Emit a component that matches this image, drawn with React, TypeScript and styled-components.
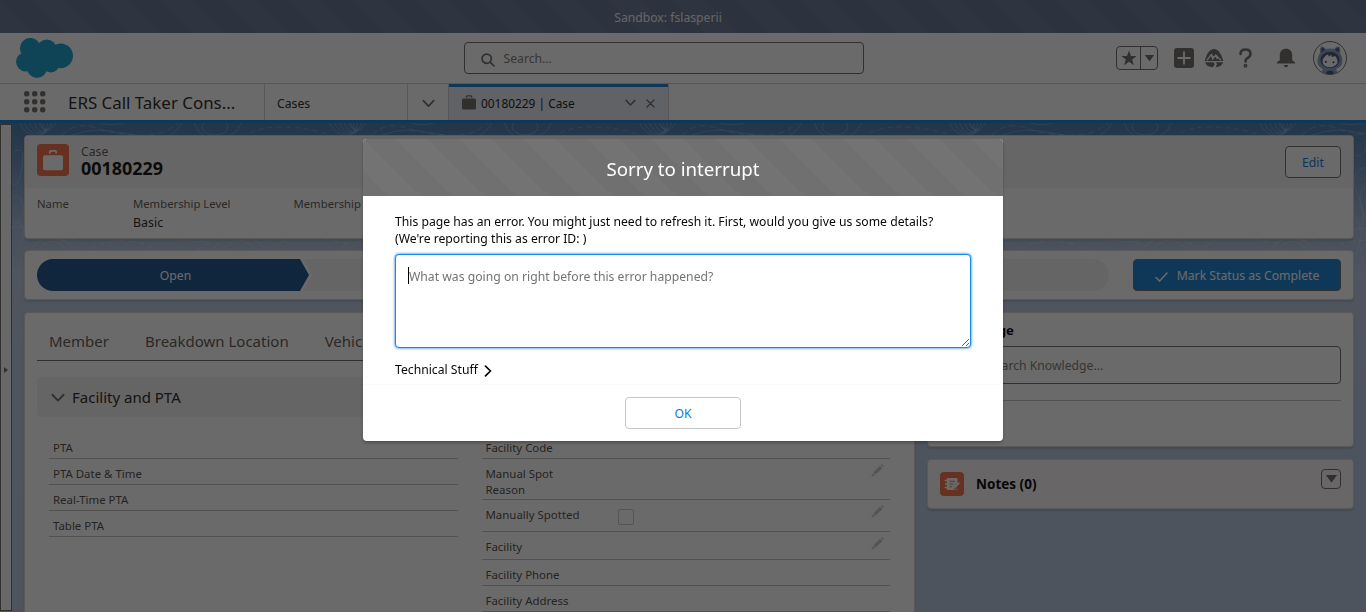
import React from "react";
import styled, { createGlobalStyle } from "styled-components";

const Global = createGlobalStyle`
  *, *::before, *::after { box-sizing: border-box; }
  html, body, #root { margin: 0; height: 100%; }
  body {
    overflow: hidden;
    font-family: "Noto Sans", "Open Sans", sans-serif;
    font-size: 12.2px;
    color: #080707;
  }
  button, textarea { font: inherit; }
`;

const brand = "#1a82d2";

const stripes = `
  background-image: linear-gradient(45deg,
    rgba(0, 0, 0, 0.025) 25%, transparent 25%, transparent 50%,
    rgba(0, 0, 0, 0.025) 50%, rgba(0, 0, 0, 0.025) 75%, transparent 75%);
  background-size: 64px 64px;
`;

const Page = styled.div`
  display: flex;
  flex-direction: column;
  width: 1366px;
  height: 612px;
  overflow: hidden;
  background: #fff;
`;

const SandboxBar = styled.div`
  flex: none;
  height: 33px;
  display: flex;
  align-items: center;
  justify-content: center;
  padding: 2px 30px 0 0;
  background-color: #667896;
  ${stripes}
  color: #f3f2f2;
`;

const Header = styled.header`
  flex: none;
  height: 51px;
  display: flex;
  align-items: center;
  justify-content: space-between;
  padding: 0 19px 0 16px;
  border-bottom: 1px solid #cfcecd;
`;

const SideSlot = styled.div<{ $end?: boolean }>`
  width: 240px;
  display: flex;
  align-items: center;
  justify-content: ${(p) => (p.$end ? "flex-end" : "flex-start")};
`;

const GlobalSearch = styled.div`
  width: 400px;
  height: 32px;
  margin-left: -36px;
  display: flex;
  align-items: center;
  gap: 9px;
  padding-left: 16px;
  border: 1px solid #706e6b;
  border-radius: 4px;
  color: #7d7b78;
`;

const FavoriteGroup = styled.div`
  display: flex;
  width: 42px;
  height: 24px;
  margin-right: 16px;
  border: 1px solid #706e6b;
  border-radius: 4px;
`;

const FavoritePart = styled.span<{ $w: number; $line?: boolean }>`
  width: ${(p) => p.$w}px;
  display: flex;
  align-items: center;
  justify-content: center;
  border-right: ${(p) => (p.$line ? "1px solid #706e6b" : "0")};
`;

const IconSlot = styled.span<{ $gap: number }>`
  display: flex;
  margin-right: ${(p) => p.$gap}px;
`;

const Nav = styled.nav`
  flex: none;
  height: 39px;
  display: flex;
  border-bottom: 3px solid ${brand};
`;

const AppName = styled.div`
  width: 265px;
  display: flex;
  align-items: center;
  gap: 22px;
  padding-left: 24px;
  border-right: 1px solid #cfcecd;
  font-size: 16.9px;
  color: #2b2826;
`;

const NavItem = styled.div<{ $w: number; $center?: boolean }>`
  width: ${(p) => p.$w}px;
  display: flex;
  align-items: center;
  justify-content: ${(p) => (p.$center ? "center" : "flex-start")};
  padding: 2px ${(p) => (p.$center ? 0 : 12)}px 0;
  border-right: ${(p) => (p.$center ? "0" : "1px solid #cfcecd")};
  color: #2b2826;
`;

const ActiveTab = styled.div`
  width: 221px;
  display: flex;
  align-items: center;
  padding: 0 13px;
  border: solid #cfcecd;
  border-width: 0 1px;
  box-shadow: inset 0 3px ${brand};
  background: #e3ebf5;
`;

const TabTitle = styled.span`
  flex: 1;
  padding: 2px 0 0 5px;
  font-size: 11.9px;
  color: #1c1a19;
`;

const TabTools = styled.span`
  display: flex;
  align-items: center;
  gap: 10px;
  padding-top: 2px;
`;

const Workspace = styled.div`
  flex: 1;
  min-height: 0;
  display: flex;
  position: relative;
  background: linear-gradient(#4a7eae 0, #5f8bb6 28px, #a6bcda 105px, #b9cae0 150px, #b3c7df 100%);
`;

const Contours = styled.svg`
  position: absolute;
  inset: 0;
`;

const Splitter = styled.div`
  flex: none;
  width: 12px;
  margin: 1px 0 1px;
  display: flex;
  align-items: center;
  justify-content: center;
  padding: 4px 1px 0 0;
  background: #fafaf9;
  border: 1px solid #706e6b;
`;

const Content = styled.main`
  flex: 1;
  min-width: 0;
  position: relative;
  display: flex;
  flex-direction: column;
  gap: 11px;
  padding: 12px 12px 0;
`;

const Card = styled.section<{ $h: number; $tint?: boolean }>`
  flex: none;
  height: ${(p) => p.$h}px;
  overflow: hidden;
  background: ${(p) => (p.$tint ? "#f7f6f6" : "#fff")};
  border: 1px solid #d6d4d2;
  border-radius: 4px;
  box-shadow: 0 2px 2px rgba(0, 0, 0, 0.12);
`;

const CaseHeader = styled.div`
  height: 52px;
  display: flex;
  align-items: center;
  padding: 0 12px;
  background: #f5f4f4;
`;

const EntityIcon = styled.span<{ $size: number }>`
  width: ${(p) => p.$size}px;
  height: ${(p) => p.$size}px;
  display: flex;
  border-radius: 4px;
  background: #f2704a;
  margin-top: ${(p) => (p.$size > 24 ? -4 : -2)}px;
`;

const CaseTitle = styled.div`
  flex: 1;
  padding: 0 0 5px 12px;
  line-height: 17px;
  color: #5d5b58;
`;

const CaseNumber = styled.div`
  font-size: 17.9px;
  font-weight: 700;
  line-height: 17px;
  color: #141211;
`;

const Button = styled.button<{ $w: number; $brand?: boolean }>`
  width: ${(p) => p.$w}px;
  height: 32px;
  display: flex;
  align-items: center;
  justify-content: center;
  gap: 9px;
  padding: 0;
  border: 1px solid #706e6b;
  border-radius: 4px;
  background: ${(p) => (p.$brand ? brand : "#fff")};
  color: ${(p) => (p.$brand ? "#fff" : "#0e78d6")};
`;

const FieldStrip = styled.div`
  display: flex;
  padding: 6px 12px;
`;

const Field = styled.div<{ $w: number }>`
  width: ${(p) => p.$w}px;
  font-size: 11.3px;
  line-height: 19px;
  color: #5d5b58;
  white-space: nowrap;
`;

const FieldValue = styled.div`
  font-size: 12.4px;
  color: #2b2826;
`;

const PathRow = styled.div`
  height: 100%;
  display: flex;
  align-items: center;
  justify-content: space-between;
  padding: 0 12px;
`;

const PathTrack = styled.div`
  width: 1072px;
  height: 32px;
  border-radius: 16px;
  background: #f3f2f2;
  overflow: hidden;
`;

const PathGap = styled.div`
  width: 275px;
  height: 32px;
  background: #fff;
  clip-path: polygon(0 0, 266px 0, 275px 50%, 266px 100%, 0 100%);
`;

const PathStage = styled.div`
  width: 272px;
  height: 32px;
  display: flex;
  align-items: center;
  justify-content: center;
  padding-left: 5px;
  background: #1d568f;
  color: #fff;
  font-size: 12.2px;
  clip-path: polygon(0 0, 263px 0, 272px 50%, 263px 100%, 0 100%);
`;

const Columns = styled.div`
  display: flex;
  gap: 12px;
  align-items: flex-start;
  padding-top: 1px;
`;

const DetailCard = styled(Card)`
  width: 891px;
  padding: 0 12px;
`;

const SideColumn = styled.div`
  width: 427px;
  display: flex;
  flex-direction: column;
  gap: 12px;
`;

const Tabs = styled.div`
  height: 48px;
  display: flex;
  align-items: center;
  gap: 36px;
  padding: 9px 12px 0;
  border-bottom: 1px solid #706e6b;
  font-size: 15px;
  color: #5d5b58;
`;

const SectionTitle = styled.div`
  height: 40px;
  margin-top: 16px;
  display: flex;
  align-items: center;
  gap: 7px;
  padding: 0 14px 1px;
  border-radius: 4px;
  background: #f3f2f2;
  font-size: 15px;
  color: #2b2826;

  svg { margin-top: 3px; }
`;

const DetailGrid = styled.div`
  display: flex;
  gap: 24px;
  padding: 16px 12px 0;
`;

const DetailColumn = styled.div`
  width: 409px;
`;

const DetailRow = styled.div<{ $h: number }>`
  height: ${(p) => p.$h}px;
  display: flex;
  padding: 7px 6px 0 4px;
  border-bottom: 1px solid #c2c0be;
  font-size: 11.45px;
  line-height: 16px;
  color: #514f4d;
`;

const DetailLabel = styled.span`
  width: 132px;
  padding-right: 40px;
  flex: none;
`;

const LongLabel = styled(DetailLabel)`
  padding-right: 0;
`;

const DetailValue = styled.span`
  flex: 1;
`;

const Checkbox = styled.span`
  display: block;
  width: 16px;
  height: 16px;
  margin-top: 2px;
  border: 1px solid #c9c7c5;
  border-radius: 2px;
`;

const SidePanel = styled.div`
  padding: 9px 12px;
`;

const SideTitle = styled.div`
  font-size: 13.2px;
  font-weight: 700;
  line-height: 17px;
`;

const KnowledgeTitle = styled(SideTitle)`
  padding-left: 1px;
`;

const KnowledgeSearch = styled.div`
  height: 38px;
  margin: 7px 0 16px;
  display: flex;
  align-items: center;
  gap: 17px;
  padding-left: 16px;
  border: 1px solid #706e6b;
  border-radius: 4px;
  color: #7d7b78;
`;

const Divider = styled.div`
  height: 1px;
  background: #c2c0be;
`;

const NotesRow = styled.div`
  height: 100%;
  display: flex;
  align-items: center;
  padding: 2px 12px 0;
`;

const NotesTitle = styled(SideTitle)`
  flex: 1;
  padding: 0 0 2px 12px;
  font-size: 13.5px;
`;

const MenuButton = styled.span`
  width: 20px;
  height: 20px;
  margin-top: -12px;
  display: flex;
  align-items: center;
  justify-content: center;
  border: 1px solid #706e6b;
  border-radius: 4px;
`;

const Backdrop = styled.div`
  position: fixed;
  inset: 0;
  display: flex;
  justify-content: center;
  align-items: flex-start;
  padding-top: 139px;
  background: rgba(8, 7, 7, 0.6);
`;

const Dialog = styled.div`
  width: 640px;
  height: 302px;
  border-radius: 4px;
  background: #fff;
  overflow: hidden;
  box-shadow: 0 2px 3px rgba(0, 0, 0, 0.25);
`;

const DialogHeader = styled.div`
  height: 57px;
  display: flex;
  align-items: center;
  justify-content: center;
  padding-top: 1px;
  background-color: #737373;
  ${stripes}
  color: #fff;
  font-size: 18.7px;
`;

const DialogBody = styled.div`
  height: 188px;
  padding: 17px 32px 0;
  line-height: 17px;
`;

const InputWrap = styled.div`
  position: relative;
  height: 95px;
  margin-top: 7px;
`;

const DetailsInput = styled.textarea`
  display: block;
  width: 576px;
  height: 94px;
  padding: 13px 13px;
  line-height: 18px;
  border: 1px solid #1589ee;
  border-radius: 4px;
  box-shadow: 0 0 3px #0070d2;
  outline: 0;
  resize: vertical;
  &::placeholder { color: #757371; }
`;

const Caret = styled.span`
  position: absolute;
  left: 13px;
  top: 13px;
  width: 1px;
  height: 17px;
  background: #000;
`;

const Technical = styled.div`
  margin-top: 12px;
  display: flex;
  align-items: center;
  gap: 6px;

  svg { margin-top: 3px; }
`;

const DialogFooter = styled.div`
  display: flex;
  justify-content: center;
  padding-top: 12px;
  border-top: 1px solid #fbfbfb;
  height: 57px;
`;

const OkButton = styled(Button)`
  border-color: #c9c7c5;
`;

const LowIcon = styled.svg`
  margin-top: 3px;
`;

const PencilIcon = styled.svg`
  margin-top: -2px;
`;

const CloudLogo = () => (
  <svg width="57" height="40" viewBox="16 38 57 40" fill="#1ba0cf">
    <circle cx="30.3" cy="48.3" r="10.4" />
    <circle cx="46.8" cy="49" r="9.6" />
    <circle cx="60.6" cy="55.8" r="12.4" />
    <circle cx="25.6" cy="61.8" r="9.6" />
    <circle cx="37" cy="68" r="10" />
    <circle cx="50.8" cy="63.5" r="9" />
    <rect x="28" y="48" width="28" height="18" />
  </svg>
);

const Chevron = ({ w = 12, color = "#706e6b", right = false, sw = 1.6 }: { w?: number; color?: string; right?: boolean; sw?: number }) => (
  <svg width={right ? (w * 8) / 12 : w} height={right ? w : (w * 8) / 12} viewBox={right ? "0 0 8 12" : "0 0 12 8"} fill="none" stroke={color} strokeWidth={sw} strokeLinecap="round" strokeLinejoin="round">
    <path d={right ? "M1.5 1.2L6.5 6L1.5 10.8" : "M1.2 1.5L6 6.5L10.8 1.5"} />
  </svg>
);

const Triangle = ({ w = 9 }: { w?: number }) => (
  <svg width={w} height={w * 0.67} viewBox="0 0 9 6" fill="#706e6b">
    <path d="M0.3 0h8.4q.5 0 .1.5L4.9 5.7q-.4.5-.8 0L.2.5Q-.2 0 .3 0z" />
  </svg>
);

const Magnifier = () => (
  <LowIcon width="14" height="14" viewBox="0 0 14 14" fill="none" stroke="#706e6b" strokeWidth="1.7" strokeLinecap="round">
    <circle cx="5.7" cy="5.7" r="4.6" />
    <path d="M9.2 9.2L13 13" />
  </LowIcon>
);

const Waffle = () => (
  <svg width="22" height="22" viewBox="0 0 22 22" fill="#706e6b">
    {[2.7, 10.7, 18.7].map((y) => [2.7, 10.7, 18.7].map((x) => <circle key={`${x}-${y}`} cx={x} cy={y} r="2.7" />))}
  </svg>
);

const Trailhead = () => (
  <svg width="20" height="20" viewBox="0 0 20 20">
    <path d="M10 1C6 1 3.6 4.8 2 9.2L.7 12.4Q.6 13 1.2 13h17.6Q19.4 13 19.3 12.4L18 9.2C16.4 4.8 14 1 10 1z" fill="#706e6b" />
    <path d="M2.8 12.4L7.3 6.5L9.8 9.6L11.8 7L17 12.4M7.3 6.5L9 12M11.8 7L13.3 11" fill="none" stroke="#fff" strokeWidth="1.3" />
    <path d="M1 14.3h8.3l1.5 1.7-2 3.3C5 19 2.2 17.6 1 14.3zM11.5 14.3h7.8c-1.2 3.2-4 4.8-7.8 5l1.6-3.3z" fill="#706e6b" />
  </svg>
);

const Bell = () => (
  <svg width="20" height="20" viewBox="0 0 20 20" fill="#706e6b">
    <path d="M10 .8C6.2.8 3.8 3.5 3.8 7v4.2c0 1-.6 1.7-1.7 2.3-.8.4-1.3.7-1.3 1.3 0 .4.3.7.7.7h17c.4 0 .7-.3.7-.7 0-.6-.5-.9-1.3-1.3-1.1-.6-1.7-1.3-1.7-2.3V7C16.2 3.5 13.8.8 10 .8z" />
    <path d="M7.8 17h4.4c0 1.3-1 2.2-2.2 2.2S7.8 18.3 7.8 17z" />
  </svg>
);

const Avatar = () => (
  <svg width="34" height="34" viewBox="0 0 34 34">
    <defs><clipPath id="face"><circle cx="17" cy="17" r="16.3" /></clipPath></defs>
    <circle cx="17" cy="17" r="16.5" fill="#fff" stroke="#706e6b" />
    <g clipPath="url(#face)">
      <path d="M8 5.5Q11 5 13 8Q17 6.800 21 8Q23 5 26.500 5.500Q28 9 27 12.500Q30.500 17 29 23Q27 27 23 28L26 34H7L10 28Q6 26.500 4.500 22Q3.800 17 7 12Q6.500 8 8 5.500z" fill="#8ea3c6" />
      <path d="M8.500 6.500Q11 6.500 12 9L8.500 11.500zM26 6.500Q23 6.500 22 9L25.800 11.500z" fill="#4c5d7f" />
      <ellipse cx="17" cy="19" rx="9.600" ry="8.200" fill="#445575" />
      <path d="M9.500 19Q12 14 15 13.500L16 15.500L18 13.800L19 16L22 15Q25 18 24.500 22Q22 26 17 26.300Q11 26 9.700 22z" fill="#fff" />
      <circle cx="12.800" cy="20.800" r="1.100" fill="#445575" />
      <circle cx="20.500" cy="21.300" r="1.100" fill="#445575" />
      <path d="M13 31Q17 28 21 31L19.500 34H14.500z" fill="#445575" />
    </g>
  </svg>
);

const CaseGlyph = ({ size, color }: { size: number; color: string }) => (
  <svg width={size} height={size} viewBox="0 0 32 32">
    <rect x="6" y="11.2" width="20" height="15" rx="2" fill={color} />
    <path d="M12.8 9.5V8q0-1.2 1.2-1.2h4q1.2 0 1.2 1.2v1.5" fill="none" stroke={color} strokeWidth="1.8" />
  </svg>
);

const TabCase = () => (
  <svg width="14" height="15" viewBox="0 0 14 15">
    <rect x="0" y="3.5" width="14" height="11" rx="1.5" fill="#706e6b" />
    <path d="M4.3 2.8V1.8q0-1 1-1h3.4q1 0 1 1v1" fill="none" stroke="#706e6b" strokeWidth="1.3" />
  </svg>
);

const NotesGlyph = () => (
  <svg width="24" height="24" viewBox="0 0 24 24">
    <path d="M8 6h8.5q1 0 1 1v3.5l-4 4.5v2.5h2.5l1.5-1.2q0 1.700-1.500 1.700H8q-1.200 0-1.200-1.200V7.200Q6.800 6 8 6z" fill="#fff" />
    <path d="M5.300 8.500h2.500M5.300 12h2.500M5.300 15.500h2.500" stroke="#fff" strokeWidth="1.4" strokeLinecap="round" />
    <path d="M9.500 9.300h5.500M9.500 12h4M9.500 14.700h2.500" stroke="#f2704a" strokeWidth="1.1" />
    <path d="M14.300 15.700L18.600 11.200" stroke="#fff" strokeWidth="2" strokeLinecap="round" />
  </svg>
);

const Pencil = () => (
  <PencilIcon width="13" height="13" viewBox="0 0 13 13" fill="#c9c7c5">
    <path d="M9 1.7L11.3 4L4.5 10.8L2.2 8.5zM9.9.9l.5-.5q.5-.5 1 0l1.2 1.2q.5.5 0 1l-.5.5zM1.6 9.3L3.7 11.4L.6 12.5Q.2 12.6.4 12.2z" />
  </PencilIcon>
);

/* One repeat of the topographic texture behind the record, 310px apart. */
const TopoTile = () => (
  <g fill="none" stroke="#fff" strokeOpacity=".2" strokeWidth="1">
    {[0, 5, 10, 15, 21].map((d) => (
      <path key={d} d={`M${18 + d} -4Q${23 + d} 12 ${38 + d / 2} ${13 - d / 3}Q${52 - d / 2} 9 ${58 - d} -4`} />
    ))}
    <path d="M62 12Q76 -2 96 5T140 12T172 4Q180 -2 190 -4" strokeDasharray="6 4" />
    <path d="M60 18Q84 4 110 8T158 16Q176 14 184 -4" />
    <path d="M92 -4Q112 8 132 -4M102 -4Q113 4 122 -4" />
    <ellipse cx="215" cy="4" rx="13" ry="8" />
    <path d="M194 -4Q196 16 220 15Q238 12 240 2Q242 -4 260 -2T306 -4" />
    <path d="M244 16Q252 4 280 4T330 12" strokeDasharray="5 4" />
    <path d="M-4 112Q20 96 40 110T90 112T150 110T210 118" />
    <path d="M30 128Q50 100 76 128M38 128Q52 108 68 128M210 128Q236 98 270 128M222 128Q238 106 258 128" />
    <path d="M90 126Q120 110 150 124T210 120T300 112T344 120" strokeDasharray="6 4" />
    <path d="M272 128Q290 104 344 114" />
  </g>
);

const EdgeContours = () => (
  <g fill="none" stroke="#fff" strokeOpacity=".18">
    <path d="M12 30Q26 20 22 44T12 60M12 76Q22 66 24 90T18 124M12 104Q24 92 24 116M12 146Q20 150 20 160T14 176" />
    <ellipse cx="1358" cy="22" rx="8" ry="11" />
    <path d="M1366 44Q1348 50 1357 70T1362 102M1366 60Q1354 74 1366 96M1354 92Q1366 106 1356 132" />
    <path d="M1354 118Q1370 130 1358 160" strokeDasharray="5 4" />
  </g>
);

type RowSpec = { label: string; h: number; edit?: boolean; check?: boolean; wrap?: boolean };

const leftRows: RowSpec[] = [
  { label: "PTA", h: 26 },
  { label: "PTA Date & Time", h: 26 },
  { label: "Real-Time PTA", h: 26 },
  { label: "Table PTA", h: 26 },
];

const rightRows: RowSpec[] = [
  { label: "Facility Code", h: 26 },
  { label: "Manual Spot Reason", h: 41, edit: true, wrap: true },
  { label: "Manually Spotted", h: 32, edit: true, check: true },
  { label: "Facility", h: 28, edit: true },
  { label: "Facility Phone", h: 26 },
  { label: "Facility Address", h: 26 },
];

const Rows = ({ rows }: { rows: RowSpec[] }) => (
  <DetailColumn>
    {rows.map((r) => {
      const Label = r.wrap ? DetailLabel : LongLabel;
      return (
        <DetailRow key={r.label} $h={r.h}>
          <Label>{r.label}</Label>
          <DetailValue>{r.check && <Checkbox />}</DetailValue>
          {r.edit && <Pencil />}
        </DetailRow>
      );
    })}
  </DetailColumn>
);

export default function App() {
  return (
    <>
      <Global />
      <Page>
        <SandboxBar>Sandbox: fslasperii</SandboxBar>
        <Header>
          <SideSlot><CloudLogo /></SideSlot>
          <GlobalSearch><Magnifier />Search...</GlobalSearch>
          <SideSlot $end>
            <FavoriteGroup>
              <FavoritePart $w={24} $line>
                <svg width="16" height="16" viewBox="0 0 16 16" fill="#706e6b"><path d="M8 .4L10 6h5.7L11.2 9.500L12.900 15.200L8 11.800L3.100 15.200L4.800 9.500L.3 6H6z" /></svg>
              </FavoritePart>
              <FavoritePart $w={16}><Triangle /></FavoritePart>
            </FavoriteGroup>
            <IconSlot $gap={10}>
              <svg width="20" height="20" viewBox="0 0 20 20"><rect width="20" height="20" rx="3" fill="#706e6b" /><path d="M10 3.5v13M3.5 10h13" stroke="#fff" strokeWidth="1.8" /></svg>
            </IconSlot>
            <IconSlot $gap={15}><Trailhead /></IconSlot>
            <IconSlot $gap={24}>
              <svg width="13" height="20" viewBox="0 0 13 20" fill="none" stroke="#706e6b" strokeWidth="2.5" strokeLinecap="round"><path d="M1.5 6Q1.5 1.5 6.5 1.5T11.5 6Q11.5 8.4 8.8 9.8Q6.5 11 6.5 13.5" /><circle cx="6.5" cy="17.8" r=".7" /></svg>
            </IconSlot>
            <IconSlot $gap={17}><Bell /></IconSlot>
            <Avatar />
          </SideSlot>
        </Header>
        <Nav>
          <AppName><Waffle />ERS Call Taker Cons...</AppName>
          <NavItem $w={143}>Cases</NavItem>
          <NavItem $w={40} $center><Chevron w={13} /></NavItem>
          <ActiveTab>
            <TabCase />
            <TabTitle>00180229 | Case</TabTitle>
            <TabTools>
              <Chevron w={11} />
              <svg width="9" height="9" viewBox="0 0 9 9" stroke="#706e6b" strokeWidth="1.4" strokeLinecap="round"><path d="M1 1l7 7M8 1L1 8" /></svg>
            </TabTools>
          </ActiveTab>
        </Nav>
        <Workspace>
          <Contours width="1366" height="200">
            {[0, 310, 620, 930, 1240].map((x) => <g key={x} transform={`translate(${x} 0)`}><TopoTile /></g>)}
            <EdgeContours />
          </Contours>
          <Splitter>
            <svg width="4" height="6" viewBox="0 0 4 6" fill="#706e6b"><path d="M0 0L4 3L0 6z" /></svg>
          </Splitter>
          <Content>
            <Card $h={104}>
              <CaseHeader>
                <EntityIcon $size={32}><CaseGlyph size={32} color="#fff" /></EntityIcon>
                <CaseTitle>Case<CaseNumber>00180229</CaseNumber></CaseTitle>
                <Button $w={56}>Edit</Button>
              </CaseHeader>
              <FieldStrip>
                <Field $w={96}>Name</Field>
                <Field $w={160.5}>Membership Level<FieldValue>Basic</FieldValue></Field>
                <Field $w={160}>Membership Status</Field>
              </FieldStrip>
            </Card>
            <Card $h={50}>
              <PathRow>
                <PathTrack><PathGap><PathStage>Open</PathStage></PathGap></PathTrack>
                <Button $w={208} $brand>
                  <LowIcon width="13" height="10" viewBox="0 0 13 10" fill="none" stroke="#fff" strokeWidth="1.5" strokeLinecap="round"><path d="M1 5.5L4.6 9L12 1" /></LowIcon>
                  Mark Status as Complete
                </Button>
              </PathRow>
            </Card>
            <Columns>
              <DetailCard $h={320}>
                <Tabs><span>Member</span><span>Breakdown Location</span><span>Vehicle</span></Tabs>
                <SectionTitle><Chevron w={14} />Facility and PTA</SectionTitle>
                <DetailGrid><Rows rows={leftRows} /><Rows rows={rightRows} /></DetailGrid>
              </DetailCard>
              <SideColumn>
                <Card $h={135}>
                  <SidePanel>
                    <KnowledgeTitle>Knowledge</KnowledgeTitle>
                    <KnowledgeSearch><Magnifier />Search Knowledge...</KnowledgeSearch>
                    <Divider />
                  </SidePanel>
                </Card>
                <Card $h={50} $tint>
                  <NotesRow>
                    <EntityIcon $size={24}><NotesGlyph /></EntityIcon>
                    <NotesTitle>Notes (0)</NotesTitle>
                    <MenuButton><Triangle w={11} /></MenuButton>
                  </NotesRow>
                </Card>
              </SideColumn>
            </Columns>
          </Content>
        </Workspace>
      </Page>
      <Backdrop>
        <Dialog role="dialog">
          <DialogHeader>Sorry to interrupt</DialogHeader>
          <DialogBody>
            <div>This page has an error. You might just need to refresh it. First, would you give us some details?</div>
            <div>(We're reporting this as error ID: )</div>
            <InputWrap>
              <DetailsInput placeholder="What was going on right before this error happened?" />
              <Caret />
            </InputWrap>
            <Technical>Technical Stuff <Chevron w={12} right color="#080707" sw={1.7} /></Technical>
          </DialogBody>
          <DialogFooter><OkButton $w={116}>OK</OkButton></DialogFooter>
        </Dialog>
      </Backdrop>
    </>
  );
}
